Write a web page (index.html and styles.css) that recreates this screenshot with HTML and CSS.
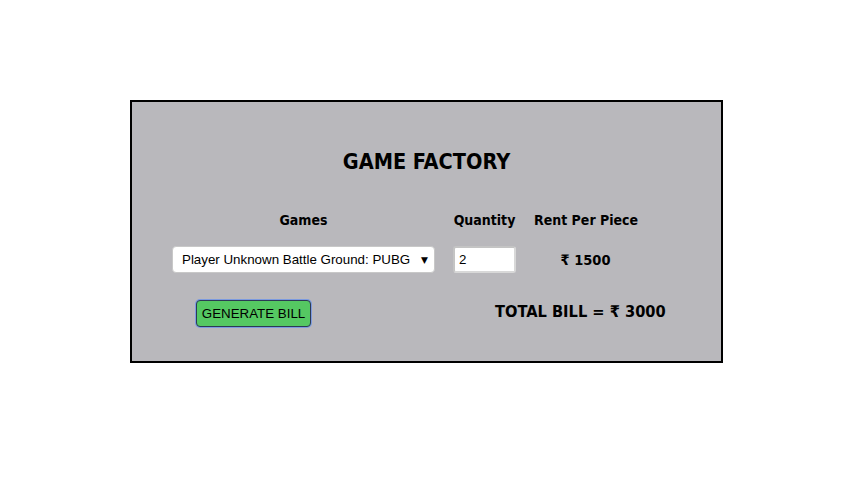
FILE: index.html
```html
<!DOCTYPE html>
<html>
<head>
<meta charset="utf-8">
<link rel="stylesheet" href="styles.css">
</head>
<body>
<div class="box">
  <h1 class="title">GAME FACTORY</h1>
  <div class="grid">
    <div class="head">Games</div>
    <div class="head">Quantity</div>
    <div class="head">Rent Per Piece</div>
    <div class="select"><span>Player Unknown Battle Ground: PUBG</span><span class="arrow">▼</span></div>
    <div class="input">2</div>
    <div class="price">₹ 1500</div>
  </div>
  <div class="bottom">
    <button class="btn">GENERATE BILL</button>
    <div class="total">TOTAL BILL = ₹ 3000</div>
  </div>
</div>
</body>
</html>
```
FILE: styles.css
```css
html, body { margin: 0; padding: 0; background: #fff; }
body { padding: 100px 0 0 130px; }
.box {
  width: 589px;
  height: 259px;
  border: 2px solid #000;
  background: #b9b8bc;
  box-sizing: content-box;
}
.title {
  margin: 48px 0 0 0;
  text-align: center;
  font-family: "DejaVu Sans Condensed", "DejaVu Sans", sans-serif;
  font-stretch: condensed;
  font-weight: bold;
  font-size: 21.5px;
  line-height: 24px;
  color: #000;
}
.grid {
  display: grid;
  grid-template-columns: 263px 63px 103px;
  column-gap: 18px;
  margin: 37px 0 0 40px;
  row-gap: 17px;
  align-items: center;
}
.head, .price, .total {
  font-family: "DejaVu Sans Condensed", "DejaVu Sans", sans-serif;
  font-stretch: condensed;
  font-weight: bold;
  font-size: 14px;
  line-height: 18px;
  text-align: center;
  white-space: nowrap;
  color: #000;
}
.price { font-size: 14.5px; }
.select {
  height: 27px;
  box-sizing: border-box;
  background: #fff;
  border: 1px solid #c8c8c8;
  border-radius: 4px;
  display: flex;
  align-items: center;
  justify-content: space-between;
  padding: 0 6px 0 9px;
  font-family: "Liberation Sans", Arial, sans-serif;
  font-size: 13.333px;
  white-space: nowrap;
  color: #000;
}
.arrow { font-size: 9px; font-family: "DejaVu Sans", sans-serif; }
.input {
  height: 27px;
  box-sizing: border-box;
  background: #fff;
  border: 2px solid #d8d8d8;
  border-top-color: #c4c4c4;
  border-left-color: #c4c4c4;
  border-radius: 3px;
  padding: 0 4px;
  display: flex;
  align-items: center;
  font-family: "Liberation Sans", Arial, sans-serif;
  font-size: 13.333px;
  color: #000;
}
.bottom {
  display: flex;
  align-items: center;
  margin: 27px 0 0 64px;
}
.btn {
  height: 27px;
  width: 115px;
  box-sizing: border-box;
  background: #55c862;
  border: 1px solid #2c3a55;
  box-shadow: 0 0 0 1px #7c9ae0;
  border-radius: 4px;
  padding: 0;
  font-family: "Liberation Sans", Arial, sans-serif;
  font-size: 13.333px;
  white-space: nowrap;
  color: #000;
}
.total {
  margin-left: 184px;
  padding-bottom: 4px;
  font-size: 16.3px;
  text-align: left;
}
```
